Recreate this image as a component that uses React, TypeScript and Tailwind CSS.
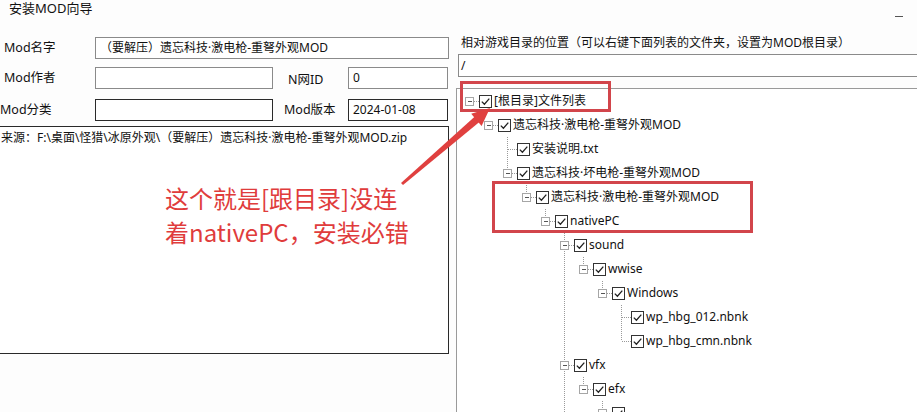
import React from 'react';

interface TreeRow {
  label: string;
  level: number;
  kids: boolean;
  next: boolean;
  cont: boolean[]; // vertical lines for ancestor columns
}

const f5 = [false, false, false, false, false];

const rows: TreeRow[] = [
  { label: '[根目录]文件列表', level: 0, kids: true, next: false, cont: [] },
  { label: '遗忘科技·激电枪-重弩外观MOD', level: 1, kids: true, next: false, cont: [false] },
  { label: '安装说明.txt', level: 2, kids: false, next: true, cont: [false, false] },
  { label: '遗忘科技·坏电枪-重弩外观MOD', level: 2, kids: true, next: false, cont: [false, false] },
  { label: '遗忘科技·激电枪-重弩外观MOD', level: 3, kids: true, next: false, cont: [false, false, false] },
  { label: 'nativePC', level: 4, kids: true, next: false, cont: [false, false, false, false] },
  { label: 'sound', level: 5, kids: true, next: true, cont: f5 },
  { label: 'wwise', level: 6, kids: true, next: false, cont: [...f5, true] },
  { label: 'Windows', level: 7, kids: true, next: false, cont: [...f5, true, false] },
  { label: 'wp_hbg_012.nbnk', level: 8, kids: false, next: true, cont: [...f5, true, false, false] },
  { label: 'wp_hbg_cmn.nbnk', level: 8, kids: false, next: false, cont: [...f5, true, false, false] },
  { label: 'vfx', level: 5, kids: true, next: true, cont: f5 },
  { label: 'efx', level: 6, kids: true, next: false, cont: [...f5, true] },
  { label: '', level: 7, kids: true, next: false, cont: [...f5, true, false] },
];

const dot = '#9a9a9a';

function LineCell({ top, bottom, across, expander }: { top?: boolean; bottom?: boolean; across?: boolean; expander?: boolean }) {
  return (
    <svg width="19" height="24" className="shrink-0" shapeRendering="crispEdges">
      {top && <line x1="9.5" y1="0" x2="9.5" y2="12" stroke={dot} strokeDasharray="1 1" />}
      {bottom && <line x1="9.5" y1="12" x2="9.5" y2="24" stroke={dot} strokeDasharray="1 1" />}
      {across && <line x1="10" y1="12.5" x2="19" y2="12.5" stroke={dot} strokeDasharray="1 1" />}
      {expander && (
        <>
          <rect x="5.5" y="8.5" width="8" height="8" fill="#fff" stroke="#a6a6a6" />
          <line x1="7.5" y1="12.5" x2="11.5" y2="12.5" stroke="#555" />
        </>
      )}
    </svg>
  );
}

function Check() {
  return (
    <svg width="13" height="13" className="shrink-0">
      <rect x="0.5" y="0.5" width="12" height="12" fill="#fff" stroke="#333" shapeRendering="crispEdges" />
      <path d="M2.8 6.6 L5.4 9.2 L10.3 3.6" fill="none" stroke="#222" strokeWidth="1.3" />
    </svg>
  );
}

function Row({ row }: { row: TreeRow }) {
  return (
    <div className="flex h-[24px] items-center">
      {row.cont.map((c, i) => (
        <LineCell key={i} top={c} bottom={c} />
      ))}
      <LineCell top={row.level > 1} bottom={row.next} across expander={row.kids} />
      <Check />
      <span className="ml-[2px] whitespace-nowrap">{row.label}</span>
    </div>
  );
}

function Field({ w, dark, children }: { w: string; dark?: boolean; children?: React.ReactNode }) {
  return (
    <div className={`${w} h-[22px] shrink-0 border bg-white px-[4px] leading-[20px] whitespace-nowrap ${dark ? 'border-[#2a2a2a]' : 'border-[#8a8a8a]'}`}>
      {children}
    </div>
  );
}

export default function App() {
  return (
    <div
      className="relative h-[412px] w-[917px] overflow-hidden bg-[#fdfdfd] text-[12px] text-[#111]"
      style={{ fontFamily: '"Noto Sans", "Noto Sans CJK SC", sans-serif' }}
    >
      {/* title bar */}
      <div className="flex h-[30px] items-start justify-between">
        <span className="pl-[9px] pt-[1px] text-[13px] leading-[15px]">安装MOD向导</span>
        <span className="mr-[14px] mt-[16px] h-[1px] w-[8px] bg-[#555]" />
      </div>

      <div className="flex">
        {/* left side */}
        <div className="w-[456px] shrink-0">
          <div className="mt-[7px] flex h-[22px] items-center">
            <span className="w-[95px] pl-[4px] text-[12.5px]">Mod名字</span>
            <Field w="w-[354px]">（要解压）遗忘科技·激电枪-重弩外观MOD</Field>
          </div>
          <div className="mt-[8px] flex h-[22px] items-center">
            <span className="w-[95px] pl-[4px] text-[12.5px]">Mod作者</span>
            <Field w="w-[178px]" />
            <span className="ml-[15px] mt-[4px] w-[60px] text-[12.5px]">N网ID</span>
            <Field w="w-[100px]">0</Field>
          </div>
          <div className="mt-[10px] flex h-[22px] items-center">
            <span className="w-[95px] text-[12.5px]">Mod分类</span>
            <Field w="w-[178px]" dark />
            <span className="ml-[11px] w-[64px] text-[12.5px]">Mod版本</span>
            <Field w="w-[100px]" dark>2024-01-08</Field>
          </div>
          <div className="ml-[-1px] mt-[5px] h-[228px] w-[450px] border border-[#2a2a2a] bg-white pl-[1px] pt-[3px] leading-[16px] whitespace-nowrap">
            来源：F:\桌面\怪猎\冰原外观\（要解压）遗忘科技·激电枪-重弩外观MOD.zip
          </div>
        </div>

        {/* right side */}
        <div className="min-w-0 flex-1">
          <div className="mt-[5px] pl-[5px] leading-[16px] whitespace-nowrap">
            相对游戏目录的位置（可以右键下面列表的文件夹，设置为MOD根目录）
          </div>
          <div className="ml-[2px] mt-[3px] h-[23px] w-[480px] border border-[#8a8a8a] bg-white pl-[2px] leading-[21px]">/</div>
          <div className="mt-[11px] h-[400px] w-[480px] border-l border-t border-[#9a9a9a] bg-white pl-[3px]">
            {rows.map((r, i) => (
              <Row key={i} row={r} />
            ))}
          </div>
        </div>
      </div>

      {/* red annotations laid over the window */}
      <div className="absolute left-[460px] top-[81px] h-[31px] w-[151px] border-[3px] border-[#d2454b]" />
      <div className="absolute left-[492px] top-[181px] h-[52px] w-[261px] border-[3px] border-[#d2454b]" />
      <svg className="absolute left-0 top-0" width="917" height="412">
        <polygon points="403,185.1 401,182.9 475.7,115.8 480.3,121.2" fill="#e0403f" />
        <polygon points="490,108 471.2,113.7 481.6,125.9" fill="#e0403f" />
      </svg>
      <div
        className="absolute left-[165px] top-[181px] text-[24px] leading-[34px] text-[#e03c3c] whitespace-nowrap"
        style={{ fontFamily: '"Noto Sans CJK SC", sans-serif' }}
      >
        <div>这个就是[跟目录]没连</div>
        <div>着nativePC，安装必错</div>
      </div>
    </div>
  );
}
